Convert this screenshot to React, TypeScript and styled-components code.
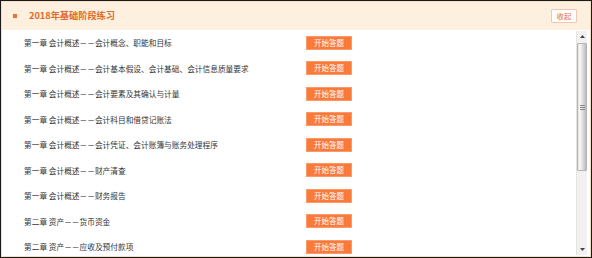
import React from "react";
import styled, { createGlobalStyle } from "styled-components";

const Global = createGlobalStyle`
  html, body { margin: 0; padding: 0; background: #fff; }
  * { box-sizing: border-box; }
  body { font-family: "Noto Sans CJK SC", "Noto Sans", sans-serif; }
`;

const Frame = styled.div`
  width: 592px;
  height: 258px;
  border: 1px solid #1a1a1a;
  background: #fff;
`;

const Panel = styled.div`
  height: 100%;
  border: 1px solid #f3dfca;
  display: flex;
  flex-direction: column;
`;

const Header = styled.div`
  height: 28px;
  flex: none;
  background: #fdf0de;
  display: flex;
  align-items: center;
  padding: 0 13px 0 11px;
`;

const Bullet = styled.span`
  width: 4px;
  height: 4px;
  background: #e8733a;
  flex: none;
  margin-right: 12px;
`;

const Title = styled.h2`
  margin: 0;
  flex: 1;
  font-size: 9.2px;
  font-weight: 700;
  color: #e0692c;
  line-height: 1;
`;

const Collapse = styled.button`
  width: 26px;
  height: 14px;
  padding: 0;
  border: 1px solid #f1c7b2;
  background: #fffdfb;
  color: #e06b4c;
  font-family: inherit;
  font-size: 7.4px;
  line-height: 12px;
  border-radius: 1px;
`;

const Body = styled.div`
  flex: 1;
  display: flex;
  min-height: 0;
`;

const List = styled.ul`
  list-style: none;
  margin: 0;
  padding: 0 0 0 22px;
  flex: 1;
  overflow: hidden;
`;

const Row = styled.li`
  height: 25.5px;
  display: flex;
  align-items: center;
`;

const Label = styled.span`
  width: 282px;
  flex: none;
  font-size: 7.7px;
  color: #333;
  white-space: nowrap;
`;

const StartButton = styled.button`
  width: 46px;
  height: 14px;
  padding: 0;
  border: 1px solid #fb9a68;
  background: #fa7a3a;
  color: #fff;
  font-family: inherit;
  font-size: 7.5px;
  line-height: 12px;
`;

const Scrollbar = styled.div`
  width: 11px;
  margin: 1px 3px 1px 0;
  flex: none;
  display: flex;
  flex-direction: column;
  background: #f1f1f1;
  border-left: 1px solid #e4e4e4;
`;

const Arrow = styled.div`
  height: 11px;
  flex: none;
  display: flex;
  align-items: center;
  justify-content: center;
`;

const Track = styled.div`
  flex: 1;
  display: flex;
  flex-direction: column;
  padding: 1px 0;
`;

const Thumb = styled.div`
  height: 128px;
  flex: none;
  border: 1px solid #b4b4b4;
  border-radius: 1px;
  background: linear-gradient(to right, #dedede 0%, #fbfbfb 22%, #e2e2e2 50%, #cfcfcf 78%, #b7b7b7 100%);
  display: flex;
  flex-direction: column;
  align-items: center;
  justify-content: center;
  gap: 1px;
`;

const Grip = styled.span`
  width: 5px;
  height: 1px;
  background: #8a8a8a;
`;

const items = [
  "第一章 会计概述－－会计概念、职能和目标",
  "第一章 会计概述－－会计基本假设、会计基础、会计信息质量要求",
  "第一章 会计概述－－会计要素及其确认与计量",
  "第一章 会计概述－－会计科目和借贷记账法",
  "第一章 会计概述－－会计凭证、会计账簿与账务处理程序",
  "第一章 会计概述－－财产清查",
  "第一章 会计概述－－财务报告",
  "第二章 资产－－货币资金",
  "第二章 资产－－应收及预付款项",
];

export default function App() {
  return (
    <>
      <Global />
      <Frame>
        <Panel>
          <Header>
            <Bullet />
            <Title>2018年基础阶段练习</Title>
            <Collapse>收起</Collapse>
          </Header>
          <Body>
            <List>
              {items.map((t) => (
                <Row key={t}>
                  <Label>{t}</Label>
                  <StartButton>开始答题</StartButton>
                </Row>
              ))}
            </List>
            <Scrollbar>
              <Arrow>
                <svg width="5" height="3" viewBox="0 0 5 3">
                  <path d="M2.5 0L5 3H0z" fill="#444" />
                </svg>
              </Arrow>
              <Track>
                <Thumb>
                  <Grip />
                  <Grip />
                  <Grip />
                </Thumb>
              </Track>
              <Arrow>
                <svg width="5" height="3" viewBox="0 0 5 3">
                  <path d="M0 0H5L2.5 3z" fill="#444" />
                </svg>
              </Arrow>
            </Scrollbar>
          </Body>
        </Panel>
      </Frame>
    </>
  );
}
